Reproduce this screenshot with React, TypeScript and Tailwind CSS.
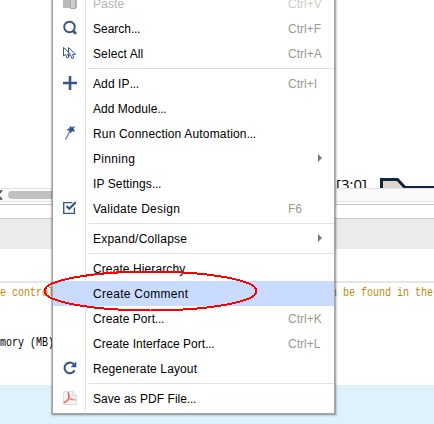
import type { ReactNode } from "react";

const BLUE = "#3a5489";

const PasteIcon = () => (
  <svg width="16" height="16" viewBox="0 0 16 16" className="block">
    <path d="M1 1h14v12H1z" fill="#b9b9b9" />
    <path d="M8.500 4.500h5v9h-5z" fill="#cdcdcd" stroke="#a8a8a8" />
  </svg>
);

const SearchIcon = () => (
  <svg width="16" height="16" viewBox="0 0 16 16" className="block" fill="none" stroke={BLUE}>
    <circle cx="7.500" cy="7" r="5.300" strokeWidth="1.900" />
    <path d="M11 10.800L14 13.800" strokeWidth="2.800" />
  </svg>
);

const SelectIcon = () => (
  <svg width="16" height="16" viewBox="0 0 16 16" className="block" fill="#fff" stroke={BLUE}>
    <path d="M6.500 2.500V11.500L8.500 10L10 13.500L11.800 12.800L10.500 9.300H13.700Z" strokeWidth="1" />
    <path d="M1.500 2.500V11L3.500 9.500L5 13L6.800 12.300L5.500 9H8.300Z" strokeWidth="1" />
  </svg>
);

const PlusIcon = () => (
  <svg width="16" height="16" viewBox="0 0 16 16" className="block" fill={BLUE}>
    <path d="M6.700 1h2.600v5.700H15v2.600H9.300V15H6.700V9.300H1V6.700h5.700z" />
  </svg>
);

const WandIcon = () => (
  <svg width="16" height="16" viewBox="0 0 16 16" className="block">
    <path d="M8 6L3.500 14.500" stroke="#7183aa" strokeWidth="1.500" />
    <path d="M8.300 1.300L9.800 2.500L12.500 1.500L11.400 4.100L12.800 6.300L10.300 6L8.600 8L7.800 5.700L5 4.900L7.500 3.500Z" fill={BLUE} stroke={BLUE} strokeWidth=".5" />
  </svg>
);

const ValidateIcon = () => (
  <svg width="16" height="16" viewBox="0 0 16 16" className="block" fill="none" stroke={BLUE}>
    <path d="M10.500 2.600H1.700V13.400H12.400V7.500" strokeWidth="1.400" />
    <path d="M4.500 6L7.300 8.800L13.800 2.300" strokeWidth="2.200" />
  </svg>
);

const RegenerateIcon = () => (
  <svg width="16" height="16" viewBox="0 0 16 16" className="block">
    <path d="M11.800 4.300A5.300 5.300 0 1 0 12.600 10.300" fill="none" stroke={BLUE} strokeWidth="2.100" />
    <path d="M14.300 1.500V7.300H8.500Z" fill={BLUE} />
  </svg>
);

const PdfIcon = () => (
  <svg width="16" height="16" viewBox="0 0 16 16" className="block">
    <path d="M1.500 1.500H11L14.500 5V14.500H1.500Z" fill="#f4f4f4" stroke="#dedede" />
    <path d="M11 1.500V5H14.500" fill="#fff" stroke="#d5d5d5" />
    <path d="M6.200 2.200C7 5 7.600 7.300 6 9.600C5 11 3.500 12 1.800 12.800" fill="none" stroke="#e0605e" strokeWidth="1.500" />
    <path d="M7 6.500C8 8.600 9.500 9.700 13.500 9.900M4.500 10.600C6.500 9.500 9.500 9.200 12.500 9.900" fill="none" stroke="#e88a88" strokeWidth="1.100" />
  </svg>
);

type Entry =
  | "separator"
  | {
      label: string;
      tracking: string;
      keys?: string;
      icon?: ReactNode;
      ellipsis?: boolean;
      submenu?: boolean;
      disabled?: boolean;
      active?: boolean;
    };

const entries: Entry[] = [
  { label: "Paste", tracking: "tracking-[0.1px]", keys: "Ctrl+V", icon: <PasteIcon />, disabled: true },
  { label: "Search", tracking: "tracking-normal", ellipsis: true, keys: "Ctrl+F", icon: <SearchIcon /> },
  { label: "Select All", tracking: "tracking-[0.1px]", keys: "Ctrl+A", icon: <SelectIcon /> },
  "separator",
  { label: "Add IP", tracking: "tracking-[0.1px]", ellipsis: true, keys: "Ctrl+I", icon: <PlusIcon /> },
  { label: "Add Module", tracking: "tracking-[0.03px]", ellipsis: true },
  { label: "Run Connection Automation", tracking: "tracking-[0.17px]", ellipsis: true, icon: <WandIcon /> },
  { label: "Pinning", tracking: "tracking-[0.3px]", submenu: true },
  { label: "IP Settings", tracking: "tracking-[0.1px]", ellipsis: true },
  { label: "Validate Design", tracking: "tracking-[0.26px]", keys: "F6", icon: <ValidateIcon /> },
  "separator",
  { label: "Expand/Collapse", tracking: "tracking-[0.23px]", submenu: true },
  "separator",
  { label: "Create Hierarchy", tracking: "tracking-[0.1px]" },
  { label: "Create Comment", tracking: "tracking-[0.28px]", active: true },
  { label: "Create Port", tracking: "tracking-[0.06px]", ellipsis: true, keys: "Ctrl+K" },
  { label: "Create Interface Port", tracking: "tracking-[0.04px]", ellipsis: true, keys: "Ctrl+L" },
  { label: "Regenerate Layout", tracking: "tracking-[0.12px]", icon: <RegenerateIcon /> },
  "separator",
  { label: "Save as PDF File", tracking: "tracking-[0.04px]", ellipsis: true, icon: <PdfIcon /> },
];

function MenuEntry({ entry }: { entry: Entry }) {
  if (entry === "separator") {
    return (
      <div className="flex h-[5px] items-center">
        <div className="h-full w-[33px] shrink-0 border-r border-[#e2e2e2]" />
        <div className="ml-[2px] h-px flex-1 bg-[#e2e2e2]" />
      </div>
    );
  }
  const tone = entry.disabled ? "text-[#b5b5b5]" : "text-black";
  const keyTone = entry.disabled ? "text-[#cbcbc8]" : "text-[#9b9a90]";
  return (
    <div className={entry.active ? "flex h-[25px] items-center bg-[#c9dcff]" : "flex h-[25px] items-center"}>
      <div
        className={
          entry.active
            ? "flex h-full w-[33px] shrink-0 items-center pb-px pl-[9px]"
            : "flex h-full w-[33px] shrink-0 items-center border-r border-[#e2e2e2] pb-px pl-[9px]"
        }
      >
        {entry.icon}
      </div>
      <span className={`ml-[7px] flex-1 whitespace-nowrap ${entry.tracking} ${tone}`}>
        {entry.label}
        {entry.ellipsis && <span className="tracking-[-0.33px]">...</span>}
      </span>
      {entry.keys && <span className={`w-[46px] whitespace-nowrap ${keyTone}`}>{entry.keys}</span>}
      {entry.submenu && (
        <svg width="4" height="8" viewBox="0 0 4 8" className="mb-px mr-[12px]">
          <path d="M0 0L4 4L0 8Z" fill="#777" />
        </svg>
      )}
    </div>
  );
}

function ContextMenu() {
  return (
    <div className="absolute -top-[9px] left-[53px] h-[422px] w-[281px] bg-white font-['Liberation_Sans',Arial,sans-serif] text-[12px] shadow-[0_0_0_1px_#a3a3a3,0_0_1px_2px_rgba(0,0,0,0.2),1px_1px_2px_2px_rgba(0,0,0,0.15)]">
      {entries.map((entry, i) => (
        <MenuEntry key={i} entry={entry} />
      ))}
    </div>
  );
}

function Canvas() {
  return (
    <div className="relative h-[188px] overflow-hidden bg-white">
      <span className="absolute left-[336px] top-[174px] font-['Open_Sans',sans-serif] text-[15px] leading-[20px] text-black">[3:0]</span>
      <svg width="54" height="12" className="absolute left-[380px] top-[177px]">
        <path d="M1.500 14V2.500H17.500L25 10.500H54V14Z" fill="#ded4d0" />
        <path d="M1.500 14V2.500H17.500L25 10.500H54" fill="none" stroke="#10263e" strokeWidth="3" />
      </svg>
    </div>
  );
}

function ConsoleText({ children, className }: { children: ReactNode; className: string }) {
  return (
    <span className={`inline-block origin-center scale-y-[1.25] whitespace-pre font-['Liberation_Mono',monospace] text-[10px] leading-[12px] ${className}`}>
      {children}
    </span>
  );
}

export default function App() {
  return (
    <main className="relative flex h-[424px] w-[434px] flex-col overflow-hidden bg-white">
      <Canvas />
      <div className="flex h-[14px] items-center border-y border-[#e2e2e2] bg-[#fafafa]">
        <svg width="3" height="10" className="shrink-0">
          <path d="M2 0L-2 5L2 10" fill="none" stroke="#555" strokeWidth="2" />
        </svg>
        <div className="ml-[5px] h-[8px] w-[80px] rounded-full bg-[#c1c1c1]" />
      </div>
      <div className="mt-[2px] h-[15px] border-y border-[#c8c8c8] bg-white" />
      <div className="h-[30px] bg-[#ebebeb]" />
      <div className="h-[32px]" />
      <div className="h-[104px] border-t-2 border-[#e6e6e6]">
        <div className="flex h-[20px] items-center justify-between">
          <ConsoleText className="text-[#c08a0a]">e control</ConsoleText>
          <ConsoleText className="mr-px text-[#c08a0a]">n be found in the</ConsoleText>
        </div>
        <div className="mt-[33px] flex h-[14px] items-center">
          <ConsoleText className="text-black">mory (MB)</ConsoleText>
        </div>
      </div>
      <div className="flex-1 bg-[#dff2fb]" />
      <ContextMenu />
      <svg width="220" height="44" className="absolute left-[40px] top-[268px]" shapeRendering="crispEdges">
        <ellipse cx="110.500" cy="23" rx="106" ry="19.500" fill="none" stroke="#ff0000" strokeWidth="2" />
      </svg>
    </main>
  );
}
